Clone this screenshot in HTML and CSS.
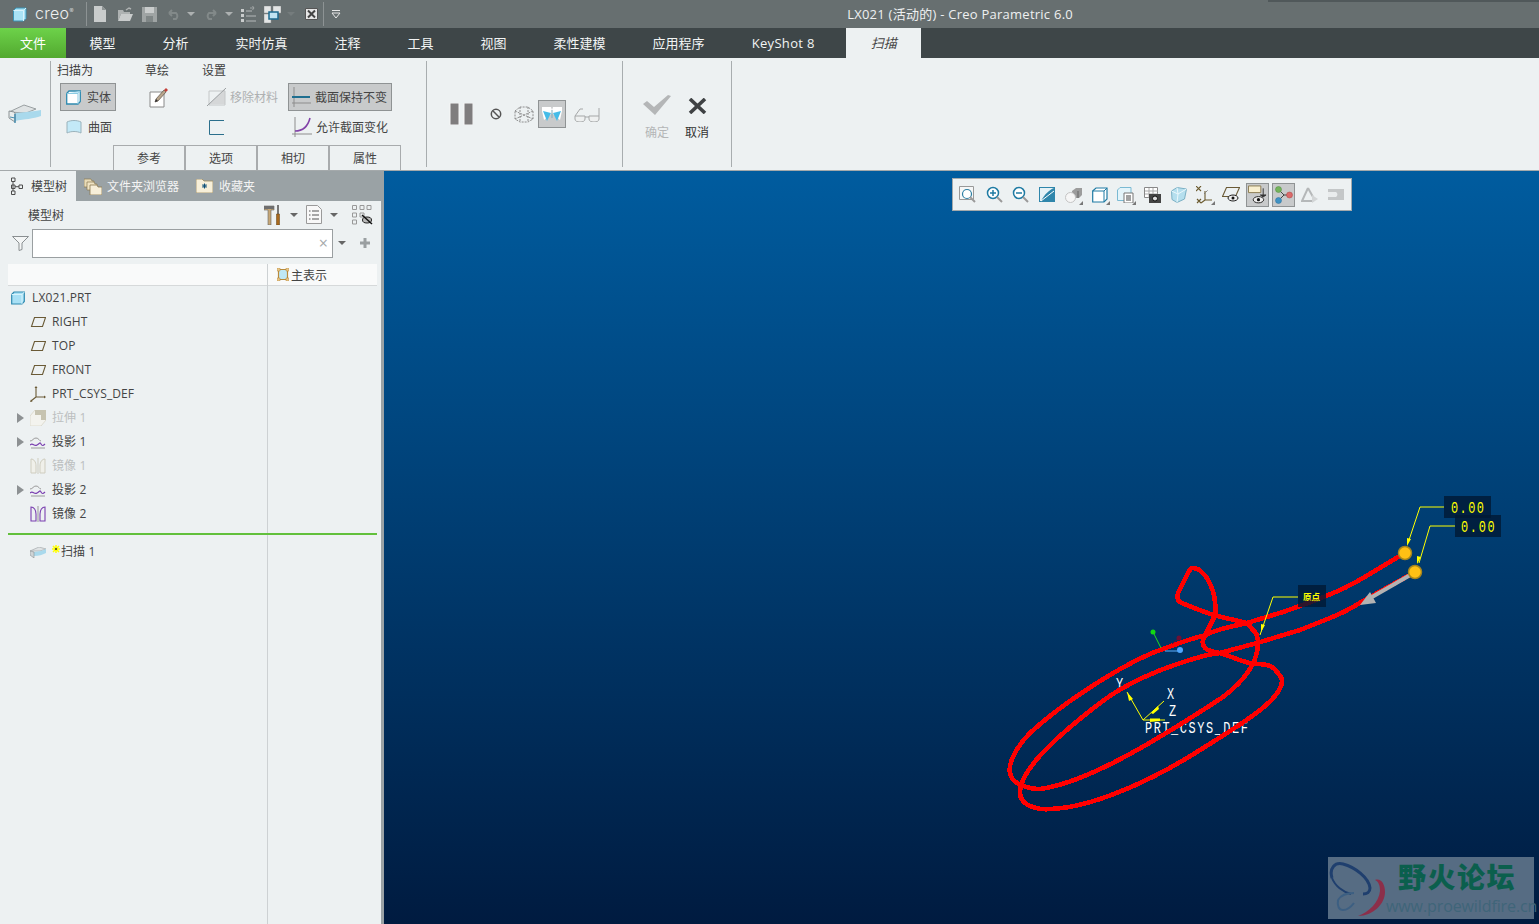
FILE: index.html
```html
<!DOCTYPE html>
<html lang="zh">
<head>
<meta charset="utf-8">
<title>LX021 (活动的) - Creo Parametric 6.0</title>
<link rel="stylesheet" href="styles.css">
</head>
<body>
<header class="titlebar">
  <div class="brand">
    <svg class="i" width="15" height="15" viewBox="0 0 15 15"><path d="M1.5 3.5 4 1h10v10.5L11.5 14h-10z" fill="#a9e2f5" stroke="#3b93b5"/><path d="M11.5 3.5V14M1.5 3.5h10l2.5-2.5" fill="none" stroke="#d9f3fb"/></svg>
    <span class="brand-name">creo<sup class="brand-mark">®</sup></span>
  </div>
  <div class="qa">
    <svg class="i" width="14" height="16" viewBox="0 0 14 16"><path d="M1 0h8l4 4v12H1z" fill="#c9cccc"/><path d="M9 0v4h4z" fill="#8e9494"/></svg>
    <svg class="i" width="17" height="15" viewBox="0 0 17 15"><path d="M1 3h5l1 2h6v2H4L1 14z" fill="#aeb2b2"/><path d="M4 7h12l-3 7H1z" fill="#c9cccc"/><path d="M9 3l3-2 2 1" fill="none" stroke="#aeb2b2" stroke-width="1.5"/></svg>
    <svg class="i" width="15" height="15" viewBox="0 0 15 15"><path d="M0 0h15v15H0z" fill="#9fa4a4"/><path d="M3 0h9v6H3z" fill="#c9cccc"/><path d="M4 9h7v6H4z" fill="#7f8686"/></svg>
    <svg class="i" width="15" height="12" viewBox="0 0 15 12"><path d="M3 5h7a4 4 0 0 1 0 6H7M3 5l3-3M3 5l3 3" fill="none" stroke="#828989" stroke-width="2"/></svg>
    <span class="caret caret-light"></span>
    <svg class="i" width="15" height="12" viewBox="0 0 15 12"><path d="M12 5H5a4 4 0 0 0 0 6h3M12 5 9 2M12 5 9 8" fill="none" stroke="#828989" stroke-width="2"/></svg>
    <span class="caret caret-light"></span>
    <svg class="i" width="15" height="16" viewBox="0 0 15 16"><path d="M0 3h3v3H0zM0 8h3v3H0zM0 13h3v3H0z" fill="#c9cccc"/><path d="M5 5h6M5 10h10M5 15h10" stroke="#b5b9b9"/><path d="M9 2h4l-1.500-2M13 2l-1.500 2" fill="none" stroke="#a0a5a5"/></svg>
    <svg class="i" width="17" height="17" viewBox="0 0 17 17"><path d="M0 0h7v7H0zM9 0h8v7H9zM0 8h7v9H0z" fill="#e3e5e5" stroke="#8d9393" stroke-width=".5"/><path d="M5 6h9v7H5z" fill="#bfe3f2" stroke="#1d6a8e" stroke-width="1.500"/></svg>
    <span class="caret caret-faint"></span>
    <svg class="i" width="13" height="12" viewBox="0 0 13 12"><path d="M.5.500h12v11H.5z" fill="#e6e6e6" stroke="#555"/><path d="m3 2.500 7 7M10 2.500l-7 7" stroke="#444" stroke-width="2"/></svg>
    <span class="qa-sep"></span>
    <svg class="i" width="10" height="8" viewBox="0 0 10 8"><path d="M1 .5h8" stroke="#e8e8e8"/><path d="M1 3h8L5 8z" fill="none" stroke="#e8e8e8"/></svg>
  </div>
  <div class="win-title">LX021 (活动的) - Creo Parametric 6.0</div>
  <div class="title-shadow"></div>
</header>

<nav class="menubar">
  <span class="menu menu-file">文件</span>
  <span class="menu">模型</span>
  <span class="menu">分析</span>
  <span class="menu">实时仿真</span>
  <span class="menu">注释</span>
  <span class="menu">工具</span>
  <span class="menu">视图</span>
  <span class="menu">柔性建模</span>
  <span class="menu">应用程序</span>
  <span class="menu menu-latin">KeyShot 8</span>
  <span class="menu menu-active">扫描</span>
</nav>

<section class="ribbon">
  <div class="rb-shape">
    <svg class="i" width="34" height="20" viewBox="0 0 34 20"><path d="M1 8 16 1l12 4-10 4z" fill="#dfe3e4" stroke="#9aa0a2"/><path d="M7 9c9-1 14-1 26-3v6c-8 3-16 3-26 5z" fill="#a9d9ec"/><path d="M6 8l-5-1v7l6 4V9z" fill="#e8ecec" stroke="#8b9295"/><path d="M7 10v9" stroke="#4a8fb0" stroke-width="1.500"/><path d="M2 13l5 1" stroke="#4a8fb0"/></svg>
  </div>
  <div class="rb-main">
    <div class="rb-cols">
      <div class="col col-sweep">
        <div class="col-label">扫描为</div>
        <div class="tool tool-on tool-solid">
          <svg class="i" width="15" height="15" viewBox="0 0 15 15"><path d="M.7 3.500 3 1h11.300v10.500L12 14H.7z" fill="#fff" stroke="#2f8ab0" stroke-width="1.300"/><path d="M12 3.500V14M.7 3.500H12l2.300-2.500" fill="#bde6f5" stroke="#8ccbe3"/></svg>
          <span>实体</span>
        </div>
        <div class="tool tool-solid">
          <svg class="i" width="16" height="15" viewBox="0 0 16 15"><path d="M1 2c4-2 10-2 14 0v11c-4-2-10-2-14 0z" fill="#c3e9f7" stroke="#9ab2bb"/></svg>
          <span>曲面</span>
        </div>
      </div>
      <div class="col col-sketch">
        <div class="col-label">草绘</div>
        <svg class="i sketch-icon" width="20" height="21" viewBox="0 0 20 21"><path d="M1 5h14v15H1z" fill="#fff" stroke="#8a8a8a"/><path d="m6 15 1-3L15 3l2 2-8 9z" fill="#b9a68c" stroke="#5a5048" stroke-width=".7"/><path d="m15 3 2-2 2 2-2 2z" fill="#c3403a"/><path d="m6 15 1-3 2 2z" fill="#333"/></svg>
      </div>
      <div class="col col-settings">
        <div class="col-label">设置</div>
        <div class="set-grid">
          <div class="tool tool-off">
            <svg class="i" width="19" height="18" viewBox="0 0 19 18"><path d="M2 16 18 1v15z" fill="#d5d7d8"/><path d="M2 3h16v14H2z" fill="none" stroke="#c4c7c8"/><path d="M0 18 19 0" stroke="#9b9fa1"/></svg>
            <span>移除材料</span>
          </div>
          <div class="tool tool-on tool-wide">
            <svg class="i" width="19" height="20" viewBox="0 0 19 20"><path d="M0 16h19M2 0v20" stroke="#8d8d8d"/><path d="M0 10h18" stroke="#1f6f90" stroke-width="2"/></svg>
            <span>截面保持不变</span>
          </div>
          <div class="tool tool-sq">
            <svg class="i" width="15" height="15" viewBox="0 0 15 15"><path d="M15 .5H.5v14H15" fill="none" stroke="#2b6f8c"/></svg>
          </div>
          <div class="tool tool-wide">
            <svg class="i" width="20" height="20" viewBox="0 0 20 20"><path d="M0 17h20M3 0v20" stroke="#8d8d8d"/><path d="M3 14c8 0 13-5 15-13" fill="none" stroke="#8242a8" stroke-width="1.600"/></svg>
            <span>允许截面变化</span>
          </div>
        </div>
      </div>
    </div>
    <div class="rb-tabs">
      <span class="rb-tab">参考</span>
      <span class="rb-tab">选项</span>
      <span class="rb-tab">相切</span>
      <span class="rb-tab">属性</span>
    </div>
  </div>
  <div class="rb-pause">
    <svg class="i icon-pause" width="24" height="22" viewBox="0 0 24 22"><path d="M1 0h9v22H1zM15 0h9v22h-9z" fill="#7f7d7e" stroke="#f7f7f7"/></svg>
    <svg class="i icon-no" width="12" height="12" viewBox="0 0 12 12"><circle cx="6" cy="6" r="4.700" fill="none" stroke="#555" stroke-width="1.500"/><path d="m2.800 2.800 6.400 6.400" stroke="#555" stroke-width="1.500"/></svg>
    <svg class="i icon-wire" width="20" height="17" viewBox="0 0 20 17"><path d="M1 5l5-4 8 0 5 4v8l-5 3H6l-5-3zM6 1v15M14 1v15M1 5l18 8M19 5 1 13" fill="none" stroke="#777" stroke-width=".8" stroke-dasharray="2 1"/></svg>
    <span class="pause-on">
      <svg class="i" width="20" height="14" viewBox="0 0 20 14"><path d="M0 0h9l1 3 1-3h9v4l-2 9-7-6-1-1-1 1-7 6-2-9z" fill="#fff"/><path d="M1 4l4 10 4-8zM11 6l4 8 4-10z" fill="#45bce8"/><path d="M9.500 3h1v8h-1z" fill="#7fa9bb"/></svg>
    </span>
    <svg class="i icon-glasses" width="27" height="15" viewBox="0 0 27 15"><path d="M1 9h10v3c0 2-2 3-5 3s-5-1-5-3zM15 9h10v3c0 2-2 3-5 3s-5-1-5-3zM11 10h4M1 9l5-7h3M25 9V1" fill="#eef0f0" stroke="#a5a7a8"/></svg>
  </div>
  <div class="rb-ok">
    <div class="ok-item ok-off">
      <svg class="i" width="28" height="20" viewBox="0 0 28 20"><path d="M0 9l4-3 7 6L25 0l3 1-16 19z" fill="#b4b6b7"/></svg>
      <span>确定</span>
    </div>
    <div class="ok-item ok-cancel">
      <svg class="i" width="19" height="16" viewBox="0 0 19 16"><path d="m2 1 15 14M17 1 2 15" stroke="#3f4244" stroke-width="3.600"/></svg>
      <span>取消</span>
    </div>
  </div>
  <div class="rb-rest"></div>
</section>

<main class="workspace">
  <aside class="panel">
    <div class="panel-tabs">
      <div class="ptab ptab-on">
        <svg class="i" width="14" height="18" viewBox="0 0 14 18"><path d="M1.500 1h3.500v3.500H1.500zM1.500 8h3.500v3.500H1.500zM1.500 14h3.500v3.500H1.500zM9 8h3.500v3.500H9zM3 4.500V14M5 9.700h4" fill="none" stroke="#4c4c4c"/></svg>
        <span>模型树</span>
      </div>
      <div class="ptab ptab-files">
        <svg class="i" width="18" height="17" viewBox="0 0 18 17"><path d="M0 1h7l1 2h2v6H0z" fill="#e9dcb8" stroke="#8a7a52" stroke-width=".7"/><path d="M3 4h7l1 2h2v6H3z" fill="#f0e4c4" stroke="#8a7a52" stroke-width=".7"/><path d="M6 7h7l1 2h4v8H6z" fill="#f7efd9" stroke="#8a7a52" stroke-width=".8"/></svg>
        <span>文件夹浏览器</span>
      </div>
      <div class="ptab ptab-fav">
        <svg class="i" width="17" height="14" viewBox="0 0 17 14"><path d="M0 0h6l2 2h9v12H0z" fill="#f7efd9" stroke="#9c8b60" stroke-width=".8"/><path d="m8.500 4.500v5M6 7h5M6.700 5.200l3.600 3.600M10.300 5.200 6.700 8.800" stroke="#0d4f78"/></svg>
        <span>收藏夹</span>
      </div>
    </div>
    <div class="tree-tools">
      <span class="tree-name">模型树</span>
      <svg class="i icon-tools" width="17" height="20" viewBox="0 0 17 20"><path d="M0 1h10v4H7v15H4V5H0z" fill="#c7a878" stroke="#66635f" stroke-width=".6"/><path d="M0 1h10v3H0z" fill="#6f6f6f"/><path d="M13 0h2v9h-2z" fill="#777"/><path d="M12.500 9h3v11h-3z" fill="#a8691f" stroke="#5f3f12" stroke-width=".5"/></svg>
      <span class="caret caret-dark caret-a"></span>
      <svg class="i icon-sheet" width="16" height="19" viewBox="0 0 16 19"><path d="M.5.500h11l4 4v14H.5z" fill="#f8f8f8" stroke="#9a9a9a"/><path d="M3 6h1.500M6 6h7M3 10h1.500M6 10h7M3 14h1.500M6 14h7" stroke="#555"/></svg>
      <span class="caret caret-dark caret-b"></span>
      <svg class="i icon-hidden" width="21" height="20" viewBox="0 0 21 20"><path d="M.5.500h4v4h-4zM.5 8h4v4h-4zM.5 15h4v4h-4zM8 8h4v4H8zM8 .5h4v4H8zM15 .5h4v4h-4z" fill="none" stroke="#999"/><ellipse cx="15" cy="15" rx="4.500" ry="3" fill="#bbb" stroke="#222"/><path d="m10 10 10 9" stroke="#111" stroke-width="1.500"/></svg>
    </div>
    <div class="search-row">
      <svg class="i" width="17" height="15" viewBox="0 0 17 15"><path d="M.5.500h16L10 7v6.500l-3 1V7z" fill="#f4f6f6" stroke="#8a8f91"/></svg>
      <div class="search-box"><span class="search-x">×</span></div>
      <span class="caret caret-dark caret-c"></span>
      <svg class="i" width="12" height="12" viewBox="0 0 12 12"><path d="M6 1v10M1 6h10" stroke="#9a9fa1" stroke-width="3"/></svg>
    </div>
    <div class="tree">
      <div class="tree-main">
        <div class="tree-head"></div>
        <div class="row row-root">
          <svg class="i" width="14" height="14" viewBox="0 0 14 14"><path d="M.7 3.500 3 1h10.300v9.500L11 13H.7z" fill="#a8e0f5" stroke="#2f8ab0" stroke-width="1.200"/><path d="M11 3.500V13M.7 3.500H11L13.300 1" fill="none" stroke="#d8f3fb"/></svg>
          <span>LX021.PRT</span>
        </div>
        <div class="row">
          <svg class="i" width="16" height="10" viewBox="-1 0 16 10"><path d="M3.500.5h11l-3 9H.5z" fill="none" stroke="#6a5a36" stroke-width="1.100"/></svg>
          <span>RIGHT</span>
        </div>
        <div class="row">
          <svg class="i" width="16" height="10" viewBox="-1 0 16 10"><path d="M3.500.5h11l-3 9H.5z" fill="none" stroke="#6a5a36" stroke-width="1.100"/></svg>
          <span>TOP</span>
        </div>
        <div class="row">
          <svg class="i" width="16" height="10" viewBox="-1 0 16 10"><path d="M3.500.5h11l-3 9H.5z" fill="none" stroke="#6a5a36" stroke-width="1.100"/></svg>
          <span>FRONT</span>
        </div>
        <div class="row">
          <svg class="i" width="16" height="16" viewBox="0 0 16 16"><path d="M6 1v10M6 11h9M6 11l-5 4" fill="none" stroke="#6a5a36" stroke-width="1.100"/><path d="m6 0-1.500 2h3zM16 11l-2-1.500v3zM0 16l1-2.500 1.500 2z" fill="#6a5a36"/></svg>
          <span>PRT_CSYS_DEF</span>
        </div>
        <div class="row row-off row-tw">
          <span class="twist"></span>
          <svg class="i" width="16" height="16" viewBox="0 0 16 16"><path d="M0 6l5-6h11v10l-5 6H0z" fill="#f3f3ee" stroke="#dedcd0"/><path d="M5 0h11v10h-5V5H5z" fill="#c6c3b0"/></svg>
          <span>拉伸 1</span>
        </div>
        <div class="row row-tw">
          <span class="twist"></span>
          <svg class="i" width="16" height="14" viewBox="0 0 16 14"><path d="M0 6c3 0 3-3 6-3s3 3 5 3" fill="none" stroke="#9a9a9a"/><path d="M1 13h14" stroke="#9a9a9a"/><path d="M0 10c3-3 4 2 7 0s3-3 4-1 2 2 4 0" fill="none" stroke="#7a3fb0" stroke-width="1.200"/></svg>
          <span>投影 1</span>
        </div>
        <div class="row row-off">
          <svg class="i" width="16" height="16" viewBox="0 0 16 16"><path d="M1 15V1c3 0 5 3 5 7v7zM15 15V1c-3 0-5 3-5 7v7z" fill="#f0f0ea" stroke="#cfcdbf"/><path d="M8 0v16" stroke="#cfcdbf"/></svg>
          <span>镜像 1</span>
        </div>
        <div class="row row-tw">
          <span class="twist"></span>
          <svg class="i" width="16" height="14" viewBox="0 0 16 14"><path d="M0 6c3 0 3-3 6-3s3 3 5 3" fill="none" stroke="#9a9a9a"/><path d="M1 13h14" stroke="#9a9a9a"/><path d="M0 10c3-3 4 2 7 0s3-3 4-1 2 2 4 0" fill="none" stroke="#7a3fb0" stroke-width="1.200"/></svg>
          <span>投影 2</span>
        </div>
        <div class="row">
          <svg class="i" width="16" height="16" viewBox="0 0 16 16"><path d="M1 15V1c3 0 5 3 5 7v7zM15 15V1c-3 0-5 3-5 7v7z" fill="none" stroke="#7a3fb0" stroke-width="1.100"/><path d="M8 0v16" stroke="#9a9a9a"/></svg>
          <span>镜像 2</span>
        </div>
        <div class="insert-line"></div>
        <div class="row row-new">
          <svg class="i" width="16" height="11" viewBox="0 0 16 11"><path d="M0 4 9 0l7 2-6 2z" fill="#dfe3e4" stroke="#9aa0a2" stroke-width=".6"/><path d="M4 5c5-1 8-1 12-3v4c-4 2-7 3-12 3z" fill="#a9d9ec"/><path d="M4 5 0 4v4l4 3z" fill="#cfd4d6" stroke="#8b9295" stroke-width=".6"/></svg>
          <svg class="i new-mark" width="8" height="8" viewBox="0 0 8 8"><path d="M4 0v8M0 4h8M1 1l6 6M7 1 1 7" stroke="#ff0" stroke-width="1.500"/><circle cx="4" cy="4" r="1" fill="#333"/></svg>
          <span>扫描 1</span>
        </div>
      </div>
      <div class="tree-side">
        <div class="tree-head side-head">
          <svg class="i" width="12" height="13" viewBox="0 0 12 13"><path d="M1.500 1.500h9v10h-9z" fill="#bfe8f6" stroke="#b88a3c" stroke-width="1.200"/><path d="M0 0h3v3H0zM9 0h3v3H9zM0 10h3v3H0zM9 10h3v3H9z" fill="#e7c88c" stroke="#b88a3c" stroke-width=".5"/></svg>
          <span>主表示</span>
        </div>
        <div class="side-fill"><div class="insert-line insert-side"></div></div>
      </div>
    </div>
  </aside>

  <section class="viewport">
    <svg class="scene" width="1155" height="753" viewBox="384 171 1155 753">
      <g class="mono-w">
        <text transform="translate(1116 689) scale(.7 1)">Y</text>
        <text transform="translate(1167 699) scale(.7 1)">X</text>
        <text transform="translate(1169 716) scale(.7 1)">Z</text>
        <text transform="translate(1145 733) scale(.7 1)" textLength="147">PRT_CSYS_DEF</text>
      </g>
      <g class="csys">
        <path d="M1143 720 1127 692M1143 720 1164 701M1143 720H1165"/>
        <path class="fillY" d="m1127 692 6 7-4 2zM1151 713l7-7 1 3-6 5zM1150 718.500h10v2.500l-10 1z"/>
      </g>
      <path class="redline" d="M1405 553C1380 567 1355 585 1333 593C1315 601 1300 606 1283 612L1247 623C1225 628 1215 630 1203 636C1185 640 1175 645 1160 650C1120 665 1060 705 1030 733C1015 748 1008 765 1010 773C1012 785 1030 789 1040 789C1085 783 1150 745 1223 697C1240 684 1258 665 1258 643C1258 637 1256 632 1253 630C1250 627 1249 624 1247 623L1213 615C1200 610 1190 607 1180 602C1177 600 1177 597 1178 593L1188 573C1190 569 1192 568 1193 568C1199 568 1203 573 1207 578C1212 587 1215 596 1215 603C1216 608 1216 612 1215 615C1212 623 1206 632 1203 640C1202 645 1204 648 1208 650C1212 652 1216 652 1220 653C1230 656 1240 661 1250 663C1256 664 1262 664 1267 665C1271 666 1275 669 1277 672C1280 675 1282 678 1282 681C1282 700 1240 725 1200 750C1150 782 1090 808 1050 809C1041 810 1034 808 1028 805C1023 802 1020 798 1020 793C1020 772 1048 743 1100 703C1130 680 1170 665 1207 655L1220 653L1257 643L1300 630L1330 618C1340 614 1350 609 1358 604C1377 593 1396 583 1415 572"/>
      <path class="arrow-shaft" d="M1412 574 1372 597"/>
      <path class="arrow-head" d="M1360 605 1370 592 1376 603z"/>
      <path class="triad tg" d="M1161 648 1153 632"/>
      <path class="triad tb" d="M1165 651H1180"/>
      <path class="triad tr" d="M1172 644 1179 638"/>
      <circle class="dot-g" cx="1153" cy="632" r="2.500"/>
      <circle class="dot-r" cx="1179" cy="638" r="2.500"/>
      <circle class="dot-b" cx="1180" cy="650" r="3"/>
      <rect class="dim-box" x="1444" y="496" width="47" height="22"/>
      <rect class="dim-box" x="1455" y="515" width="46" height="22"/>
      <rect class="dim-box" x="1298" y="585" width="28" height="22"/>
      <g class="leader">
        <path d="M1444 507H1420L1409 540"/>
        <path d="M1455 526H1430L1419 563"/>
        <path d="M1298 597H1273L1260 635"/>
        <path class="fillY" d="m1407 546 0-8 4 1zM1417 564l0-8 4 1zM1261 632l0-8 4 1z"/>
      </g>
      <g class="mono-y">
        <text transform="translate(1451 513) scale(.7 1)" textLength="47">0.00</text>
        <text transform="translate(1461 532) scale(.7 1)" textLength="48">0.00</text>
        <text class="dim-cjk" x="1303" y="600">原点</text>
      </g>
      <circle class="ball" cx="1405" cy="553" r="6.500"/>
      <circle class="ball" cx="1415" cy="572" r="6.500"/>
    </svg>

    <div class="view-tools">
      <span class="vt"><svg class="i" width="18" height="17" viewBox="0 0 18 17"><path d="M.5.500h14v13H.5z" fill="#f5f7f7" stroke="#999"/><circle cx="8" cy="8" r="4.500" fill="#fff" stroke="#2a7ea3" stroke-width="1.200"/><path d="m11 11 5 5" stroke="#9a9a9a" stroke-width="2"/></svg></span>
      <span class="vt"><svg class="i" width="17" height="17" viewBox="0 0 17 17"><circle cx="7" cy="7" r="5.500" fill="#fff" stroke="#1f7ba3" stroke-width="1.500"/><path d="M4 7h6M7 4v6" stroke="#1f7ba3" stroke-width="1.500"/><path d="m11 11 5 5" stroke="#9a9a9a" stroke-width="2"/></svg></span>
      <span class="vt"><svg class="i" width="17" height="17" viewBox="0 0 17 17"><circle cx="7" cy="7" r="5.500" fill="#fff" stroke="#1f7ba3" stroke-width="1.500"/><path d="M4 7h6" stroke="#1f7ba3" stroke-width="1.500"/><path d="m11 11 5 5" stroke="#9a9a9a" stroke-width="2"/></svg></span>
      <span class="vt"><svg class="i" width="16" height="15" viewBox="0 0 16 15"><path d="M0 0h16v15H0z" fill="#2f86ab"/><path d="M1 1h14c-5 2-9 6-13 13H1z" fill="#e6f2f6"/><path d="M2 14 15 4" stroke="#fff"/></svg></span>
      <span class="vt vt-c"><svg class="i" width="17" height="16" viewBox="0 0 17 16"><path d="M7 4l4-3h6v7l-3 3H7z" fill="#9c9c9c"/><path d="M13 4v7" stroke="#666"/><circle cx="5.500" cy="10.500" r="5" fill="#f6f6f6" stroke="#c4c4c4"/></svg></span>
      <span class="vt vt-c"><svg class="i" width="16" height="16" viewBox="0 0 16 16"><path d="M.7 4 4 1h11v11l-3 3H.7z" fill="#fff" stroke="#1f7ba3" stroke-width="1.200"/><path d="M12 4v11M.7 4H12l3-3" fill="none" stroke="#1f7ba3"/></svg></span>
      <span class="vt vt-c"><svg class="i" width="17" height="16" viewBox="0 0 17 16"><path d="M.5 3 3 .5h11v10l-3 3H.5z" fill="#e4f4fa" stroke="#7bbad3"/><path d="M7 6h9v10H7z" fill="#fff" stroke="#777"/><path d="M9 9h5M9 11h5M9 13h5" stroke="#444"/></svg></span>
      <span class="vt"><svg class="i" width="17" height="16" viewBox="0 0 17 16"><path d="M.5.500h13v10H.5z" fill="#fff" stroke="#888"/><path d="M1 4h13M1 7h13M5 1v10M9 1v10" stroke="#aaa"/><path d="M5 7h12v9H5z" fill="#444"/><circle cx="11" cy="11.500" r="2.500" fill="#ddd" stroke="#111"/></svg></span>
      <span class="vt"><svg class="i" width="16" height="16" viewBox="0 0 16 16"><path d="M.5 4 6 .5l9.500 1.500-2 10L6 15.500l-5-3z" fill="#b5dfee" stroke="#7bb0c4"/><path d="M6 .5 7 7l8.500-5M7 7 6 15.500M7 7 .5 4" fill="none" stroke="#eaf7fb"/></svg></span>
      <span class="vt vt-c"><svg class="i" width="18" height="18" viewBox="0 0 18 18"><path d="m0 0 5 5M5 0 0 5M1 17l4-4M1 13l4 4M9 5v9M9 14h7M9 14l-4 3" stroke="#6b5a2e" stroke-width="1.100"/><path d="M8 8l4-4" stroke="#777" stroke-dasharray="2 1"/></svg></span>
      <span class="vt"><svg class="i" width="18" height="15" viewBox="0 0 18 15"><path d="M4.500.5h13l-4 9H.5z" fill="none" stroke="#6a5a36" stroke-width="1.100"/><ellipse cx="11" cy="11" rx="5" ry="3" fill="#eee" stroke="#222"/><circle cx="11" cy="11" r="1.500" fill="#111"/></svg></span>
      <span class="vt vt-on"><svg class="i" width="19" height="19" viewBox="0 0 20 19"><path d="M.5.500h13v7H.5z" fill="#f8efcf" stroke="#8a7a52"/><path d="M16 3v7M13 10h6l-3 2z" stroke="#333" fill="#333"/><ellipse cx="11" cy="15" rx="5.500" ry="3.300" fill="#eee" stroke="#222"/><circle cx="11" cy="15" r="1.700" fill="#111"/></svg></span>
      <span class="vt vt-on"><svg class="i" width="18" height="18" viewBox="0 0 18 18"><path d="M4 4l5 5 6 0M9 9l-5 5" stroke="#444" fill="none"/><circle cx="3.500" cy="3.500" r="3" fill="#74b45c" stroke="#4f8a3e" stroke-width=".5"/><circle cx="14.500" cy="9" r="3" fill="#dc6a6a" stroke="#a94444" stroke-width=".5"/><circle cx="3.500" cy="14.500" r="3" fill="#3f93c4" stroke="#2a6f9a" stroke-width=".5"/></svg></span>
      <span class="vt"><svg class="i" width="17" height="16" viewBox="0 0 17 16"><path d="M7 1 1 14h10" fill="none" stroke="#b5b8b9" stroke-width="2"/><path d="m7 1 5 9" stroke="#b5b8b9" stroke-width="2"/><path d="M11 8l6 4-6 4z" fill="#d2d5d6"/></svg></span>
      <span class="vt"><svg class="i" width="16" height="11" viewBox="0 0 16 11"><path d="M0 0h16v11H0z" fill="#c4c7c8"/><path d="M0 3h8a3 3 0 0 1 0 5H0z" fill="#e9eceD"/></svg></span>
    </div>

    <div class="watermark">
      <svg class="i wm-logo" width="58" height="60" viewBox="0 0 58 60"><path d="M3 20C0 10 6 4 14 6 26 9 40 20 41 30 41 34 38 36 34 36" fill="none" stroke="#1f3f6e" stroke-width="3"/><path d="M3 20C6 28 14 34 22 36" fill="none" stroke="#1f3f6e" stroke-width="2"/><path d="M46 22C52 20 56 26 56 34 56 46 44 58 29 58 40 54 50 44 51 33 51 28 50 24 46 22z" fill="#8c2f4a"/><path d="M9 42C12 37 18 35 25 35M9 42C8 48 10 52 14 52 18 52 22 49 25 45" fill="none" stroke="#3c5f82" stroke-width="2"/></svg>
      <div class="wm-text">
        <div class="wm-cn">野火论坛</div>
        <div class="wm-url">www.proewildfire.cn</div>
      </div>
    </div>
  </section>
</main>
</body>
</html>
```

FILE: styles.css
```css
* { box-sizing: border-box; }
html, body { margin: 0; height: 100%; }
body {
  width: 1539px;
  height: 924px;
  overflow: hidden;
  display: flex;
  flex-direction: column;
  font-family: "Open Sans", "Noto Sans CJK SC", sans-serif;
  font-size: 12px;
  color: #444;
  background: #edf1f2;
}
.i { display: block; flex: none; }

/* title bar */
.titlebar {
  position: relative;
  height: 28px;
  flex: none;
  display: flex;
  align-items: center;
  background: #676f70;
  color: #f0f0f0;
}
.brand {
  width: 87px;
  height: 24px;
  padding-left: 12px;
  display: flex;
  align-items: center;
  gap: 8px;
  border-right: 1px solid #8d9394;
}
.brand-name {
  font-family: "Inter", sans-serif;
  font-size: 16px;
  font-weight: 300;
  letter-spacing: .3px;
  color: #eef0f0;
  line-height: 20px;
  padding-bottom: 2px;
}
.brand-mark { font-size: 6px; vertical-align: 6px; line-height: 0; }
.qa {
  display: grid;
  grid-template-columns: 26px 24px 25px 23px 12px 29px 6px 32px 17px 20px 21px 2px 24px;
  align-items: center;
  justify-items: center;
  height: 24px;
}
.qa-sep { width: 1px; height: 24px; background: #8d9394; }
.caret {
  display: block;
  width: 0;
  height: 0;
  border-left: 4px solid transparent;
  border-right: 4px solid transparent;
  border-top: 4px solid #5c6162;
}
.caret-light { border-top-color: #adb1b1; }
.caret-faint { border-top-color: #757c7d; }
.caret-dark { border-top-color: #666; }
.win-title {
  margin-left: auto;
  padding: 0 466px 2px 0;
  font-size: 13px;
  letter-spacing: .25px;
  color: #eef0f0;
  white-space: nowrap;
}
.title-shadow {
  position: absolute;
  top: 0;
  right: 0;
  width: 271px;
  height: 2px;
  background: #50585a;
}

/* menu bar */
.menubar {
  height: 30px;
  flex: none;
  display: flex;
  background: #3e4648;
  color: #f2f4f4;
  font-size: 13px;
  line-height: 30px;
}
.menu { padding: 0 23.5px; white-space: nowrap; }
.menu-latin { letter-spacing: .33px; }
.menu-file {
  width: 66px;
  padding: 0;
  text-align: center;
  color: #fff;
  background: linear-gradient(#6dd24a, #52a92f);
}
.menu-active {
  margin-left: 8px;
  padding: 0 20px;
  width: 75px;
  text-align: center;
  background: #edf1f2;
  color: #444;
  font-style: italic;
}

/* ribbon */
.ribbon {
  height: 113px;
  flex: none;
  display: flex;
  background: #edf1f2;
  border-bottom: 1px solid #a4a9ab;
}
.rb-shape {
  width: 51px;
  margin: 3px 0;
  padding-left: 8px;
  display: flex;
  align-items: center;
  border-right: 1px solid #a8adaf;
}
.rb-main {
  width: 376px;
  display: flex;
  flex-direction: column;
  margin-top: 3px;
  position: relative;
}
.rb-main::after {
  content: "";
  position: absolute;
  top: 0;
  bottom: 3px;
  right: 0;
  width: 1px;
  background: #a8adaf;
}
.rb-cols { height: 85px; display: flex; padding-left: 6px; }
.col { display: flex; flex-direction: column; }
.col-label { height: 22px; padding-top: 2px; line-height: 16px; font-size: 12px; color: #3d3d3d; }
.col-sweep { width: 88px; }
.col-sketch { width: 57px; }
.col-settings { flex: 1; }
.sketch-icon { margin: 4px 0 0 4px; }
.tool {
  height: 28px;
  display: flex;
  align-items: center;
  gap: 6px;
  font-size: 12px;
  white-space: nowrap;
  color: #444;
  border: 1px solid transparent;
}
.tool > span { padding-bottom: 1px; }
.tool-solid { width: 56px; margin: 0 0 2px 3px; padding-left: 5px; }
.tool-on { background: #c8cacb; border-color: #8f9394; }
.tool-off { padding-left: 4px; color: #aeb0b1; gap: 4px; }
.tool-wide { padding-left: 3px; gap: 4px; }
.tool-sq { padding-left: 6px; }
.set-grid {
  display: grid;
  grid-template-columns: 86px 104px;
  grid-auto-rows: 28px;
  row-gap: 2px;
}
.rb-tabs { display: flex; margin-left: 62px; height: 25px; }
.rb-tab {
  width: 72px;
  display: flex;
  align-items: center;
  justify-content: center;
  border: 1px solid #a8abad;
  border-bottom: 0;
  font-size: 12px;
  color: #444;
}
.rb-pause {
  width: 196px;
  margin: 3px 0;
  display: flex;
  align-items: center;
  padding-left: 22px;
  border-right: 1px solid #a8adaf;
}
.icon-pause { margin-right: 17px; }
.icon-no { margin-right: 12px; }
.icon-wire { margin-right: 4px; }
.pause-on {
  width: 28px;
  height: 28px;
  display: flex;
  align-items: center;
  justify-content: center;
  background: #c8cacb;
  border: 1px solid #8f9394;
  margin-right: 8px;
}
.rb-ok {
  width: 109px;
  margin: 3px 0;
  display: flex;
  padding-left: 18px;
  gap: 8px;
  border-right: 1px solid #a8adaf;
}
.ok-item {
  width: 32px;
  display: flex;
  flex-direction: column;
  align-items: center;
  font-size: 12px;
  line-height: 16px;
  color: #333;
}
.ok-off { color: #b4b6b7; padding-top: 34px; gap: 10px; }
.ok-cancel { padding-top: 37px; gap: 11px; }
.rb-rest { flex: 1; }

/* workspace */
.workspace { flex: 1; min-height: 0; display: flex; }
.panel {
  width: 384px;
  flex: none;
  display: flex;
  flex-direction: column;
  background: #edf1f2;
  border-right: 3px solid #9aa2a5;
}
.panel-tabs {
  height: 30px;
  flex: none;
  display: flex;
  margin-right: -3px;
  background: #9aa2a5;
  color: #f4f4f4;
}
.ptab { display: flex; align-items: center; gap: 6px; padding-left: 8px; white-space: nowrap; }
.ptab-on { width: 76px; padding-left: 10px; gap: 7px; background: #edf1f2; color: #444; }
.ptab-files { width: 112px; gap: 5px; }
.tree-tools {
  height: 27px;
  flex: none;
  display: flex;
  align-items: center;
  padding-left: 28px;
}
.tree-name { width: 236px; color: #444; }
.caret-a { margin: 0 8px 0 9px; }
.caret-b { margin: 0 14px 0 8px; }
.search-row {
  height: 30px;
  flex: none;
  display: flex;
  align-items: center;
  padding-left: 12px;
}
.search-row > svg:first-child { margin-right: 3px; }
.search-box {
  width: 301px;
  height: 29px;
  background: #fff;
  border: 1px solid #9a9fa1;
  display: flex;
  align-items: center;
  justify-content: flex-end;
  padding-right: 4px;
}
.search-x { color: #a5a9ab; font-size: 16px; line-height: 16px; }
.caret-c { margin: 0 13px 0 5px; }
.tree {
  flex: 1;
  min-height: 0;
  margin: 6px 4px 0 8px;
  display: flex;
}
.tree-main { width: 260px; border-right: 1px solid #cdd1d3; }
.tree-side { flex: 1; display: flex; flex-direction: column; }
.tree-head {
  height: 22px;
  background: #f9fafa;
  border-bottom: 1px solid #d6d9da;
}
.side-head { display: flex; align-items: center; gap: 2px; padding-left: 9px; }
.side-fill { flex: 1; padding-top: 247px; }
.row {
  height: 24px;
  display: flex;
  align-items: center;
  padding-left: 22px;
  gap: 6px;
  white-space: nowrap;
  letter-spacing: .12px;
}
.row > span:last-child { padding-bottom: 2px; }
.row-root { padding-left: 3px; gap: 7px; }
.row-tw { padding-left: 9px; }
.row-off { color: #bcbfc0; }
.twist {
  width: 0;
  height: 0;
  border-top: 5px solid transparent;
  border-bottom: 5px solid transparent;
  border-left: 7px solid #8d9193;
}
.insert-line { height: 2px; margin: 7px -1px 5px 0; background: #62c03c; position: relative; }
.insert-side { margin-top: 0; margin-right: 0; }
.new-mark { margin: 0 -5px 0 0; align-self: flex-start; margin-top: 5px; }

/* viewport */
.viewport {
  position: relative;
  flex: 1;
  background: linear-gradient(#005c9f, #001b40);
  overflow: hidden;
}
.scene { display: block; }
.mono-w text, .mono-y text { font-family: "Liberation Mono", monospace; font-size: 17px; }
.mono-w text { fill: #fff; }
.mono-y text { fill: #ff0; }
.mono-y .dim-cjk { font-family: "Noto Sans CJK SC", sans-serif; font-size: 8.5px; font-weight: 700; }
.csys path, .leader path { fill: none; stroke: #ff0; stroke-width: 1; }
.csys .fillY, .leader .fillY { fill: #ff0; stroke: none; }
.redline {
  fill: none;
  stroke: #f00;
  stroke-width: 4.6;
  shape-rendering: crispEdges;
  stroke-linejoin: round;
}
.arrow-shaft { stroke: #b3b3b3; stroke-width: 4; fill: none; }
.arrow-head { fill: #b3b3b3; }
.triad { fill: none; stroke-width: 1; }
.tg { stroke: #1fdc1f; }
.tb { stroke: #5db0ff; }
.tr { stroke: #5e1038; }
.dot-g { fill: #12d912; }
.dot-r { fill: #6d1034; }
.dot-b { fill: #4da6ff; }
.dim-box { fill: #001a36; fill-opacity: .82; }
.ball { fill: #ffc014; stroke: #a8861c; stroke-width: 1.500; }

.view-tools {
  position: absolute;
  left: 568px;
  top: 7px;
  width: 400px;
  height: 33px;
  display: flex;
  align-items: center;
  padding-left: 2px;
  background: #edf1f2;
  border: 1px solid #a4a9ab;
}
.vt {
  position: relative;
  width: 26.3px;
  height: 24px;
  flex: none;
  display: flex;
  align-items: center;
  justify-content: center;
}
.vt-c::after {
  content: "";
  position: absolute;
  right: 3px;
  bottom: 2px;
  border-left: 4px solid transparent;
  border-bottom: 4px solid #777;
}
.vt-on { width: 23px; margin: 0 1.65px; background: #c8cacb; border: 1px solid #8f9394; }

.watermark {
  position: absolute;
  left: 944px;
  top: 686px;
  width: 206px;
  height: 62px;
  display: flex;
  align-items: flex-start;
  padding: 1px 0 0 1px;
  background: #566c83;
}
.wm-text { margin-left: -1px; display: flex; flex-direction: column; margin-top: -1px; }
.wm-cn {
  padding-left: 12px;
  font-family: "Noto Sans CJK SC", sans-serif;
  font-size: 28px;
  font-weight: 900;
  line-height: 38px;
  letter-spacing: 1.5px;
  color: #0b5f4d;
  white-space: nowrap;
}
.wm-url {
  margin-top: 1px;
  font-family: "Open Sans", sans-serif;
  font-size: 16px;
  line-height: 21px;
  letter-spacing: -.1px;
  color: #3f6579;
  white-space: nowrap;
}
```
